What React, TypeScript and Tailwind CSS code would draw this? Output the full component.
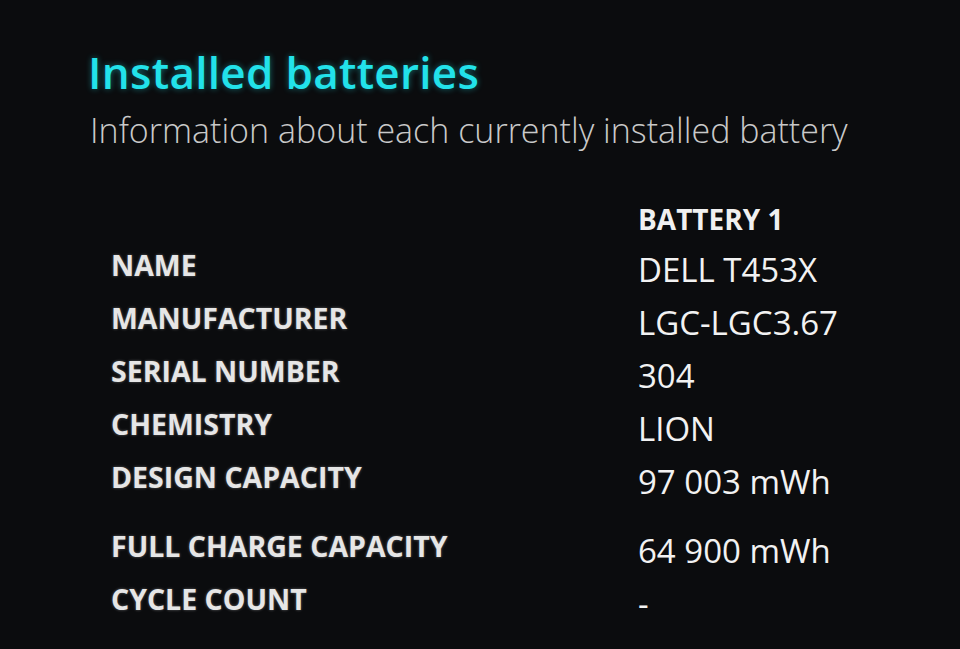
const rows: { label: string; value: string; extra?: boolean }[] = [
  { label: 'NAME', value: 'DELL T453X' },
  { label: 'MANUFACTURER', value: 'LGC-LGC3.67' },
  { label: 'SERIAL NUMBER', value: '304' },
  { label: 'CHEMISTRY', value: 'LION' },
  { label: 'DESIGN CAPACITY', value: '97 003 mWh' },
  { label: 'FULL CHARGE CAPACITY', value: '64 900 mWh', extra: true },
  { label: 'CYCLE COUNT', value: '-' },
]

export default function App() {
  return (
    <div
      className="h-[649px] w-[960px] overflow-hidden bg-[#0b0c0e] pl-[88px] pt-[44px]"
      style={{ fontFamily: '"Open Sans", "Noto Sans", sans-serif' }}
    >
      <h1 className="text-[44px] font-semibold leading-[56px] tracking-[0.3px] text-[#22e2ea] [text-shadow:0_0_6px_rgba(34,226,234,0.45)]">
        Installed batteries
      </h1>
      <p className="mt-[8px] pl-[2px] text-[34px] font-light leading-[44px] text-[#c9c9c9]">
        Information about each currently installed battery
      </p>

      <div className="mt-[45px] flex flex-col pl-[23px]">
        <div className="flex h-[44px] items-center">
          <div className="w-[527px]" />
          <div className="text-[28px] font-bold text-[#f0f0f0]">BATTERY 1</div>
        </div>
        {rows.map((r) => (
          <div
            key={r.label}
            className={`flex h-[53px] items-center ${r.extra ? 'mt-[16px]' : ''}`}
          >
            <div className="w-[527px] pb-[5px] text-[28.5px] font-bold text-[#e6e6e6] [text-shadow:0_0_3px_rgba(255,255,255,0.35)]">
              {r.label}
            </div>
            <div className="pt-[4px] text-[33px] font-normal text-[#f2f2f2]">{r.value}</div>
          </div>
        ))}
      </div>
    </div>
  )
}
